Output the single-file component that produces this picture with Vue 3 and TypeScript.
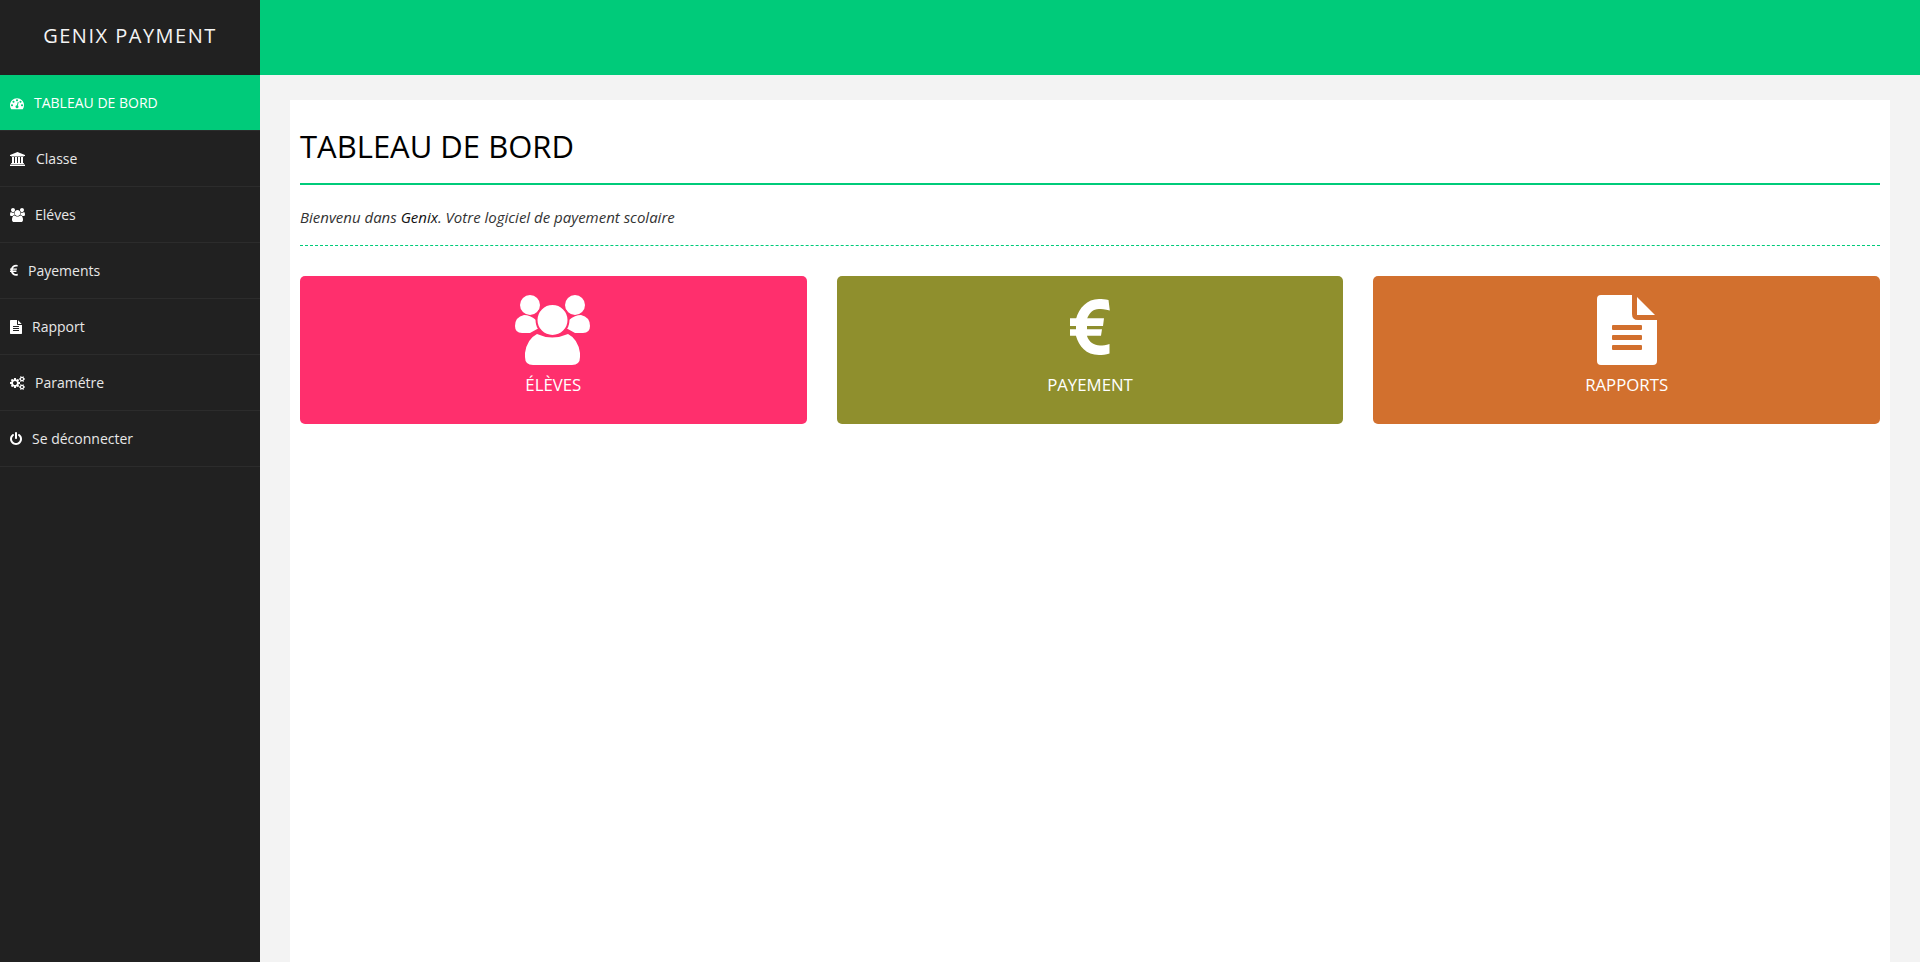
<script setup lang="ts">
interface NavItem {
  label: string
  icon: string
  active?: boolean
}

const icons: Record<string, { w: number; d: string }> = {
  dashboard: {
    w: 1792,
    d: 'M384 1184q0-53-37.5-90.5t-90.5-37.5-90.5 37.5-37.5 90.5 37.5 90.5 90.5 37.5 90.5-37.5 37.5-90.5zm192-448q0-53-37.5-90.5t-90.5-37.5-90.5 37.5-37.5 90.5 37.5 90.5 90.5 37.5 90.5-37.5 37.5-90.5zm428 481l101-382q6-26-7.5-48.5t-38.5-29.5-48 6.5-30 39.5l-101 382q-60 5-107 43.5t-63 98.5q-20 77 20 146t117 89 146-20 89-117q16-60-6-117t-72-91zm660-33q0-53-37.5-90.5t-90.5-37.5-90.5 37.5-37.5 90.5 37.5 90.5 90.5 37.5 90.5-37.5 37.5-90.5zm-640-640q0-53-37.5-90.5t-90.5-37.5-90.5 37.5-37.5 90.5 37.5 90.5 90.5 37.5 90.5-37.5 37.5-90.5zm448 192q0-53-37.5-90.5t-90.5-37.5-90.5 37.5-37.5 90.5 37.5 90.5 90.5 37.5 90.5-37.5 37.5-90.5zm320 448q0 261-141 483-19 29-54 29h-1402q-35 0-54-29-141-221-141-483 0-182 71-348t191-286 286-191 348-71 348 71 286 191 191 286 71 348z'
  },
  bank: {
    w: 2048,
    d: 'M960 0l960 384v128h-128q0 26-20.5 45t-48.5 19h-1526q-28 0-48.5-19t-20.5-45h-128v-128zm-704 640h256v768h128v-768h256v768h128v-768h256v768h128v-768h256v768h59q28 0 48.5 19t20.5 45v64h-1664v-64q0-26 20.5-45t48.5-19h59v-768zm1595 960q28 0 48.5 19t20.5 45v128h-1920v-128q0-26 20.5-45t48.5-19h1782z'
  },
  users: {
    w: 1920,
    d: 'M593 896q-162 5-265 128h-134q-82 0-138-40.5t-56-118.5q0-353 124-353 6 0 43.5 21t97.5 42.5 119 21.5q67 0 133-23-5 37-5 66 0 139 81 256zm1071 637q0 120-73 189.5t-194 69.5h-874q-121 0-194-69.5t-73-189.5q0-53 3.5-103.5t14-109 26.5-108.5 43-97.5 62-81 85.5-53.5 111.5-20q10 0 43 21.5t73 48 107 48 135 21.5 135-21.5 107-48 73-48 43-21.5q61 0 111.5 20t85.5 53.5 62 81 43 97.5 26.5 108.5 14 109 3.5 103.5zm-1024-1277q0 106-75 181t-181 75-181-75-75-181 75-181 181-75 181 75 75 181zm704 384q0 159-112.5 271.5t-271.5 112.5-271.5-112.5-112.5-271.5 112.5-271.5 271.5-112.5 271.5 112.5 112.5 271.5zm576 225q0 78-56 118.5t-138 40.5h-134q-103-123-265-128 81-117 81-256 0-29-5-66 66 23 133 23 59 0 119-21.5t97.5-42.5 43.5-21q124 0 124 353zm-128-609q0 106-75 181t-181 75-181-75-75-181 75-181 181-75 181 75 75 181z'
  },
  euro: {
    w: 1024,
    d: 'M976 1277l35 159q3 12-3 22.5t-17 14.5l-5 1q-4 2-10.5 3.5t-16 4.5-21.5 5.5-25.5 5-30 5-33.5 4.5-36.5 3-38.5 1q-234 0-409-130.5t-238-351.5h-95q-13 0-22.5-9.5t-9.5-22.5v-113q0-13 9.5-22.5t22.5-9.5h66q-2-57 1-105h-67q-14 0-23-9t-9-23v-114q0-14 9-23t23-9h98q67-210 243.5-338t400.5-128q102 0 194 23 11 3 20 15 6 11 3 24l-43 159q-3 13-14 19.5t-24 2.5l-4-1q-4-1-11.5-2.5l-17.5-3.5-22.5-3.5-26-3-29-2.5-29.5-1q-126 0-226 64t-150 176h468q16 0 25 12 10 12 7 26l-24 114q-5 26-32 26h-488q-3 37 0 105h459q15 0 25 12 9 12 6 27l-24 112q-2 11-11 18.5t-20 7.5h-387q48 117 149.5 185.5t228.5 68.5q18 0 36-1.5t33.5-3.5 29.5-4.5 24.5-5 18.5-4.5l12-3 5-2q13-5 26 2 12 7 15 21z'
  },
  file: {
    w: 1536,
    d: 'M1468 476q14 14 28 36h-472v-472q22 14 36 28zm-476 164h544v1056q0 40-28 68t-68 28h-1344q-40 0-68-28t-28-68v-1600q0-40 28-68t68-28h800v544q0 40 28 68t68 28zm160 736v-64q0-14-9-23t-23-9h-704q-14 0-23 9t-9 23v64q0 14 9 23t23 9h704q14 0 23-9t9-23zm0-256v-64q0-14-9-23t-23-9h-704q-14 0-23 9t-9 23v64q0 14 9 23t23 9h704q14 0 23-9t9-23zm0-256v-64q0-14-9-23t-23-9h-704q-14 0-23 9t-9 23v64q0 14 9 23t23 9h704q14 0 23-9t9-23z'
  },
  cogs: {
    w: 1920,
    d: 'M896 896q0-106-75-181t-181-75-181 75-75 181 75 181 181 75 181-75 75-181zm768 512q0-52-38-90t-90-38-90 38-38 90q0 53 37.5 90.5t90.5 37.5 90.5-37.5 37.5-90.5zm0-1024q0-52-38-90t-90-38-90 38-38 90q0 53 37.5 90.5t90.5 37.5 90.5-37.5 37.5-90.5zm-384 421v185q0 10-7 19.5t-16 10.5l-155 24q-11 35-32 76 34 48 90 115 7 11 7 20 0 12-7 19-23 30-82.5 89.5t-78.5 59.5q-11 0-21-7l-115-90q-37 19-77 31-11 108-23 155-7 24-30 24h-186q-11 0-20-7.5t-10-17.5l-23-153q-34-10-75-31l-118 89q-7 7-20 7-11 0-21-8-144-133-144-160 0-9 7-19 10-14 41-53t47-61q-23-44-35-82l-152-24q-10-1-17-9.5t-7-19.5v-185q0-10 7-19.5t16-10.5l155-24q11-35 32-76-34-48-90-115-7-11-7-20 0-12 7-20 22-30 82-89t79-59q11 0 21 7l115 90q34-18 77-32 11-108 23-154 7-24 30-24h186q11 0 20 7.5t10 17.5l23 153q34 10 75 31l118-89q8-7 20-7 11 0 21 8 144 133 144 160 0 8-7 19-12 16-42 54t-45 60q23 48 34 82l152 23q10 2 17 10.5t7 19.5zm640 533v140q0 16-149 31-12 27-30 52 51 113 51 138 0 4-4 7-122 71-124 71-8 0-46-47t-52-68q-20 2-30 2t-30-2q-14 21-52 68t-46 47q-2 0-124-71-4-3-4-7 0-25 51-138-18-25-30-52-149-15-149-31v-140q0-16 149-31 13-29 30-52-51-113-51-138 0-4 4-7 4-2 35-20t59-34 30-16q8 0 46 46.5t52 67.5q20-2 30-2t30 2q51-71 92-112l6-2q4 0 124 70 4 3 4 7 0 25-51 138 17 23 30 52 149 15 149 31zm0-1024v140q0 16-149 31-12 27-30 52 51 113 51 138 0 4-4 7-122 71-124 71-8 0-46-47t-52-68q-20 2-30 2t-30-2q-14 21-52 68t-46 47q-2 0-124-71-4-3-4-7 0-25 51-138-18-25-30-52-149-15-149-31v-140q0-16 149-31 13-29 30-52-51-113-51-138 0-4 4-7 4-2 35-20t59-34 30-16q8 0 46 46.5t52 67.5q20-2 30-2t30 2q51-71 92-112l6-2q4 0 124 70 4 3 4 7 0 25-51 138 17 23 30 52 149 15 149 31z'
  },
  power: {
    w: 1536,
    d: 'M1536 896q0 156-61 298t-164 245-245 164-298 61-298-61-245-164-164-245-61-298q0-182 80.5-343t226.5-270q43-32 95.5-25t83.5 50q32 42 24.5 94.5t-49.5 84.5q-98 74-151.5 181t-53.5 228q0 104 40.5 198.5t109.5 163.5 163.5 109.5 198.5 40.5 198.5-40.5 163.5-109.5 109.5-163.5 40.5-198.5q0-121-53.5-228t-151.5-181q-42-32-49.5-84.5t24.5-94.5q31-43 84-50t95 25q146 109 226.5 270t80.5 343zm-640-768v640q0 52-38 90t-90 38-90-38-38-90v-640q0-52 38-90t90-38 90 38 38 90z'
  }
}

const navItems: NavItem[] = [
  { label: 'TABLEAU DE BORD', icon: 'dashboard', active: true },
  { label: 'Classe', icon: 'bank' },
  { label: 'Eléves', icon: 'users' },
  { label: 'Payements', icon: 'euro' },
  { label: 'Rapport', icon: 'file' },
  { label: 'Paramétre', icon: 'cogs' },
  { label: 'Se déconnecter', icon: 'power' }
]
</script>

<template>
  <div class="layout">
    <aside class="sidebar">
      <div class="brand">GENIX PAYMENT</div>
      <nav>
        <a
          v-for="item in navItems"
          :key="item.label"
          class="nav-item"
          :class="{ active: item.active }"
          href="#"
        >
          <svg
            class="nav-icon"
            :viewBox="`0 0 ${icons[item.icon].w} 1792`"
            :style="{ width: icons[item.icon].w / 128 + 'px' }"
          >
            <path :d="icons[item.icon].d" fill="currentColor" />
          </svg>
          <span>{{ item.label }}</span>
        </a>
      </nav>
    </aside>

    <div class="main">
      <header class="topbar"></header>
      <div class="page">
        <section class="content">
          <h1 class="title">TABLEAU DE BORD</h1>
          <p class="welcome">Bienvenu dans <b>Genix</b>. Votre logiciel de payement scolaire</p>

          <div class="cards">
            <a class="card pink" href="#">
              <svg class="card-icon" width="76" height="70" viewBox="0 0 76 70">
                <circle cx="15" cy="10" r="10" fill="#fff" />
                <circle cx="60" cy="10" r="10" fill="#fff" />
                <path d="M9 20Q15 20 21 25Q21 31 24 33L15 38H7Q0 38 0 31Q0 22 9 20z" fill="#fff" />
                <path d="M66 20Q60 20 54 25Q54 31 51 33L60 38H68Q75 38 75 31Q75 22 66 20z" fill="#fff" />
                <path d="M22 39Q12 44 10 58V62Q10 70 18 70H57Q65 70 65 62V58Q63 44 53 39Q37 46 22 39z" fill="#fff" />
                <circle cx="37.500" cy="25" r="16" fill="#fff" stroke="#ff2f6d" stroke-width="2" />
              </svg>
              <span>ÉLÈVES</span>
            </a>

            <a class="card olive" href="#">
              <svg class="card-icon" width="40" height="70" viewBox="0 0 40 70">
                <path
                  d="M38.500 5L39.800 15.500C35 14.200 31 14 29 14C23 14 19 18 17 24L17 41C19 47 24 50.500 30 50.500C33 50.500 36 50 39.500 49L39.500 58.500C36 59.500 32 60 29 60C16 60 9 51 6 41L6 24C9 13 17 4 29 4C32 4 35 4.200 38.500 5Z"
                  fill="#fff"
                />
                <path d="M0 23.300H34L33 31H0zM0 34.300H32L31 40.700H0z" fill="#fff" />
              </svg>
              <span>PAYEMENT</span>
            </a>

            <a class="card orange" href="#">
              <svg class="card-icon" width="60" height="70" viewBox="0 0 60 70">
                <path d="M4 0h31v19q0 6 6 6h19v41q0 4-4 4H4q-4 0-4-4V4q0-4 4-4z" fill="#fff" />
                <path d="M40 2l18 18H40z" fill="#fff" />
                <rect x="15" y="30" width="30" height="5" rx="1" fill="#d2702e" />
                <rect x="15" y="40" width="30" height="5" rx="1" fill="#d2702e" />
                <rect x="15" y="50" width="30" height="5" rx="1" fill="#d2702e" />
              </svg>
              <span>RAPPORTS</span>
            </a>
          </div>
        </section>
      </div>
    </div>
  </div>
</template>

<style>
html,
body {
  margin: 0;
  height: 100%;
  overflow: hidden;
}
</style>

<style scoped>
*,
*::before,
*::after {
  box-sizing: border-box;
}
.layout {
  display: flex;
  height: 100vh;
  font-family: 'Open Sans', sans-serif;
  font-size: 14px;
  background: #f3f3f3;
}
.sidebar {
  width: 260px;
  flex: none;
  background: #212121;
  color: #fff;
}
.brand {
  height: 75px;
  padding-bottom: 4px;
  display: flex;
  align-items: center;
  justify-content: center;
  font-size: 20px;
  letter-spacing: 1.5px;
  color: #f4f4f4;
}
.nav-item {
  display: flex;
  align-items: center;
  gap: 10px;
  height: 56px;
  padding-left: 10px;
  color: #e8e8e8;
  text-decoration: none;
  border-bottom: 1px solid #2c2c2c;
}
.nav-item.active {
  background: #00cb7a;
  color: #fff;
}
.nav-icon {
  height: 14px;
  flex: none;
  color: #fff;
}
.main {
  flex: 1;
  min-width: 0;
  display: flex;
  flex-direction: column;
}
.topbar {
  height: 75px;
  flex: none;
  background: #00cb7a;
}
.page {
  flex: 1;
  display: flex;
  padding: 25px 30px 0;
}
.content {
  flex: 1;
  background: #fff;
  padding: 10px;
}
.title {
  margin: 0;
  height: 75px;
  padding-top: 14px;
  font-size: 31px;
  font-weight: 400;
  line-height: 45px;
  color: #000;
  border-bottom: 2px solid #00cb7a;
}
.welcome {
  margin: 0;
  height: 61px;
  padding-top: 20px;
  font-size: 15px;
  line-height: 24px;
  font-style: italic;
  color: #333;
  border-bottom: 1px dashed #00cb7a;
}
.welcome b {
  font-weight: 500;
  color: #111;
}
.cards {
  display: grid;
  grid-template-columns: repeat(3, 1fr);
  gap: 30px;
  margin-top: 30px;
}
.card {
  height: 148px;
  padding-top: 19px;
  border-radius: 5px;
  display: flex;
  flex-direction: column;
  align-items: center;
  color: #fff;
  text-decoration: none;
  font-size: 16.800px;
  line-height: 22px;
}
.card-icon {
  flex: none;
  margin-bottom: 9px;
}
.pink {
  background: #ff2f6d;
}
.olive {
  background: #8f8f2d;
}
.orange {
  background: #d2702e;
}
</style>
